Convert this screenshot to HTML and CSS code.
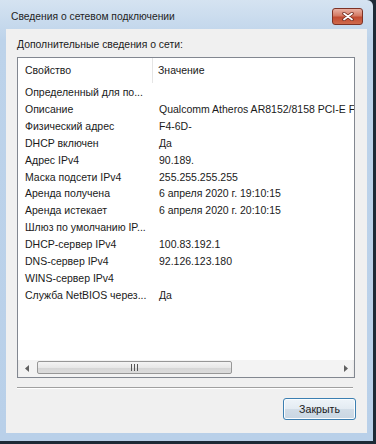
FILE: index.html
```html
<!DOCTYPE html>
<html lang="ru">
<head>
  <meta charset="UTF-8">
  <meta name="viewport" content="width=device-width, initial-scale=1.0">
  <title>Сведения о сетевом подключении</title>
  <link rel="stylesheet" href="styles.css">
</head>
<body>
  <div class="window">
    <div class="titlebar">
      <span class="title">Сведения о сетевом подключении</span>
      <div class="close-btn">
        <svg width="12" height="9" viewBox="0 0 12 9">
          <path d="M2 1.5 L10 7.5 M10 1.5 L2 7.5" stroke="#6b2418" stroke-width="3.4" stroke-linecap="round"/>
          <path d="M2 1.5 L10 7.5 M10 1.5 L2 7.5" stroke="#fff" stroke-width="1.8" stroke-linecap="round"/>
        </svg>
      </div>
    </div>

    <div class="client">
      <div class="label">Дополнительные сведения о сети:</div>

      <div class="listbox">
        <div class="header">
          <div class="col1">Свойство</div>
          <div class="col2">Значение</div>
        </div>

        <table class="rows">
          <tr><td>Определенный для по...</td><td></td></tr>
          <tr><td>Описание</td><td>Qualcomm Atheros AR8152/8158 PCI-E Fast Ethernet Controller</td></tr>
          <tr><td>Физический адрес</td><td>F4-6D-</td></tr>
          <tr><td>DHCP включен</td><td>Да</td></tr>
          <tr><td>Адрес IPv4</td><td>90.189.</td></tr>
          <tr><td>Маска подсети IPv4</td><td>255.255.255.255</td></tr>
          <tr><td>Аренда получена</td><td>6 апреля 2020 г. 19:10:15</td></tr>
          <tr><td>Аренда истекает</td><td>6 апреля 2020 г. 20:10:15</td></tr>
          <tr><td>Шлюз по умолчанию IP...</td><td></td></tr>
          <tr><td>DHCP-сервер IPv4</td><td>100.83.192.1</td></tr>
          <tr><td>DNS-сервер IPv4</td><td>92.126.123.180</td></tr>
          <tr><td>WINS-сервер IPv4</td><td></td></tr>
          <tr><td>Служба NetBIOS через...</td><td>Да</td></tr>
        </table>
        <div class="filler"></div>

        <div class="hscroll">
          <div class="arrow">
            <svg width="4" height="7" viewBox="0 0 4 7"><path d="M4 0 L0 3.5 L4 7 Z" fill="#606060"/></svg>
          </div>
          <div class="track">
            <div class="thumb">
              <svg width="7" height="7" viewBox="0 0 7 7">
                <path d="M0.5 0 V7 M3.5 0 V7 M6.5 0 V7" stroke="#555" stroke-width="1"/>
              </svg>
            </div>
          </div>
          <div class="arrow">
            <svg width="4" height="7" viewBox="0 0 4 7"><path d="M0 0 L4 3.5 L0 7 Z" fill="#606060"/></svg>
          </div>
        </div>
      </div>

      <div class="separator"></div>

      <div class="buttons">
        <button class="btn">Закрыть</button>
      </div>
    </div>
  </div>
</body>
</html>
```

FILE: styles.css
```css
body {
  margin: 0;
  background-color: #1d2a36;
  font-family: "Liberation Sans", Arial, sans-serif;
  font-size: 10.5px;
  color: #1a1a1a;
}
.window {
  width: 367px;
  height: 433px;
  padding: 0 6px 8px 0;
  background: linear-gradient(#d5e3f1, #bdd3ea 40px, #b9d0e9);
  border-radius: 0 6px 0 0;
}
.titlebar {
  height: 29px;
  display: flex;
  align-items: center;
  justify-content: space-between;
  padding: 0 4px 0 11px;
  box-sizing: border-box;
}
.title {
  font-size: 10.3px;
  color: #1e1e1e;
  margin-top: 3px;
}
.close-btn {
  width: 29px;
  height: 15px;
  border: 1px solid #7d3225;
  border-radius: 3px;
  background: linear-gradient(#eab1a3, #d47a64 45%, #c24b31 55%, #cf6a4c);
  display: flex;
  align-items: center;
  justify-content: center;
  margin-top: 4px;
}
.client {
  margin-left: 6px;
  width: 361px;
  height: 404px;
  background-color: #f0f0f0;
  padding: 8px 11px 0;
  box-sizing: border-box;
}
.label {
  line-height: 16px;
  height: 16px;
  margin-bottom: 4px;
  font-size: 10.4px;
}
.listbox {
  width: 338px;
  height: 321px;
  border: 1px solid #828790;
  box-sizing: border-box;
  background-color: #fff;
  display: flex;
  flex-direction: column;
  overflow: hidden;
}
.header {
  display: flex;
  height: 25px;
  line-height: 25px;
  flex-shrink: 0;
  color: #202020;
}
.header .col1 {
  width: 135px;
  padding-left: 7px;
  box-sizing: border-box;
  border-right: 1px solid #e5e5e5;
}
.header .col2 {
  padding-left: 5px;
}
.rows {
  border-collapse: collapse;
  table-layout: fixed;
  width: 336px;
  margin-top: 1px;
  flex-shrink: 0;
}
.rows td {
  height: 16.9px;
  padding: 0;
  line-height: 16.9px;
  white-space: nowrap;
  overflow: hidden;
}
.rows td:first-child {
  width: 128px;
  padding-left: 7px;
}
.rows td:last-child {
  padding-left: 6px;
}
.filler {
  flex: 1;
}
.hscroll {
  height: 17px;
  display: flex;
  flex-shrink: 0;
  background: linear-gradient(90deg, #e9e9e9, #f3f3f3 2px, #f3f3f3 calc(100% - 2px), #e9e9e9);
}
.arrow {
  width: 17px;
  display: flex;
  align-items: center;
  justify-content: center;
}
.track {
  flex: 1;
  padding: 1px 2px;
}
.thumb {
  width: 195px;
  height: 13px;
  border: 1px solid #979797;
  border-radius: 2px;
  box-sizing: border-box;
  background: linear-gradient(#f4f4f4, #e8e8e8 50%, #d6d6d6 51%, #dcdcdc);
  display: flex;
  align-items: center;
  justify-content: center;
}
.separator {
  width: 336px;
  margin-top: 9px;
  border-top: 1px solid #a0a0a0;
  border-bottom: 1px solid #fff;
}
.buttons {
  display: flex;
  justify-content: flex-end;
  margin-top: 9px;
}
.btn {
  width: 73px;
  height: 22px;
  font-family: inherit;
  font-size: 10.6px;
  color: #1a1a1a;
  border: 1px solid #3c7fb1;
  border-radius: 3px;
  box-shadow: inset 0 0 0 1px #fbfdfe;
  background: linear-gradient(#eef4f9, #e3ebf2 50%, #d2dde7 51%, #c9d6e2);
  padding: 0;
}
```
